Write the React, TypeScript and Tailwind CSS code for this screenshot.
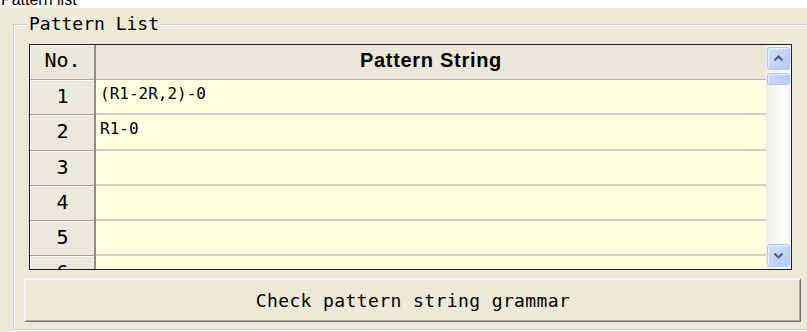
import React from "react";

const mono = { fontFamily: '"DejaVu Sans Mono", "Liberation Mono", monospace' } as const;

const rows: { n: string; text?: string; h: string }[] = [
  { n: "1", text: "(R1-2R,2)-0", h: "h-[35px]" },
  { n: "2", text: "R1-0", h: "h-[36px]" },
  { n: "3", h: "h-[35px]" },
  { n: "4", h: "h-[35px]" },
  { n: "5", h: "h-[35px]" },
  { n: "6", h: "h-[35px]" },
];

function ScrollButton({ dir }: { dir: "up" | "down" }) {
  return (
    <div className="mx-[1px] h-[23px] w-[23px] rounded-[3px] border border-[#b3c6f3] bg-[linear-gradient(135deg,#d3e0fe,#b6caf8)] shadow-[inset_1px_1px_0_#e9f0ff] flex items-center justify-center">
      <svg width="11" height="7" viewBox="0 0 11 7">
        {dir === "up" ? (
          <path d="M1.5 5.5 L5.5 1.5 L9.5 5.5" fill="none" stroke="#4d6185" strokeWidth="2.2" />
        ) : (
          <path d="M1.5 1.5 L5.5 5.5 L9.5 1.5" fill="none" stroke="#4d6185" strokeWidth="2.2" />
        )}
      </svg>
    </div>
  );
}

export default function App() {
  return (
    <div className="relative h-[332px] w-[807px] overflow-hidden bg-[#ece9d8]">
      <div className="h-[8px] overflow-hidden bg-white">
        <div
          className="mt-[-8px] pl-[1px] text-[16px] leading-[16px] text-black"
          style={{ fontFamily: '"Liberation Sans", Arial, sans-serif' }}
        >
          Pattern list
        </div>
      </div>

      <div className="ml-[13px] mt-[16px] h-[306px] w-[820px] border border-[#d0d0bf] shadow-[inset_1px_1px_0_#ffffff,1px_1px_0_#ffffff] relative">
        <div
          className="absolute left-[13px] top-[-12px] bg-[#ece9d8] px-[2px] text-[18px] leading-[22px] text-black"
          style={mono}
        >
          Pattern List
        </div>

        {/* table */}
        <div className="ml-[15px] mt-[19px] flex h-[226px] w-[763px] border border-[#1e1e1e] shadow-[inset_1px_1px_0_#7a7a72] overflow-hidden">
          <div className="flex flex-1 flex-col overflow-hidden">
            {/* header */}
            <div className="flex h-[35px] shrink-0">
              <div
                className="flex w-[66px] items-center justify-center border-r-2 border-b border-r-[#8e8c82] border-b-[#a7a598] bg-[#ebe8d9] pb-[5px] pl-[1px] text-[20px] text-black shadow-[inset_1px_1px_0_#fdfdf8]"
                style={mono}
              >
                No.
              </div>
              <div
                className="flex flex-1 items-center justify-center border-b border-[#b9b7ab] bg-[#ebe8d9] pb-[4px] text-[20px] font-bold tracking-[0.7px] text-black"
                style={{ fontFamily: '"Liberation Sans", Arial, sans-serif' }}
              >
                Pattern String
              </div>
            </div>
            {rows.map((r) => (
              <div key={r.n} className={`flex shrink-0 ${r.h}`}>
                <div
                  className="flex w-[66px] items-center justify-center border-r-2 border-b border-r-[#8e8c82] border-b-[#a19f94] bg-[#ebe9db] pb-[3px] pl-[1px] text-[20px] text-black shadow-[inset_1px_1px_0_#fdfdf8]"
                  style={mono}
                >
                  {r.n}
                </div>
                <div
                  className="flex-1 border-b-2 border-[#cfcfc6] bg-[#ffffe1] pl-[4px] pt-[5px] text-[16px] leading-[18px] text-black"
                  style={mono}
                >
                  {r.text ?? ""}
                </div>
              </div>
            ))}
          </div>
          {/* scrollbar */}
          <div className="flex w-[25px] flex-col justify-between bg-[linear-gradient(90deg,#eeede6,#fbfbf8_70%,#f4f3ee)] py-[2px]">
            <div className="flex flex-col gap-[3px]">
              <ScrollButton dir="up" />
              <div className="mx-[1px] h-[12px] w-[23px] rounded-[3px] border border-[#b3c6f3] bg-[linear-gradient(90deg,#cbdafd,#b9ccf8)] shadow-[inset_1px_1px_0_#e9f0ff]" />
            </div>
            <ScrollButton dir="down" />
          </div>
        </div>

        {/* button */}
        <div
          className="ml-[10px] mt-[8px] flex h-[44px] w-[777px] items-center justify-center border-t-2 border-l-2 border-r border-b border-t-[#fbfaf6] border-l-[#f7f6f0] border-r-[#716f64] border-b-[#716f64] bg-[#ece9d8] pb-[1px] text-[18px] tracking-[0.4px] text-black shadow-[inset_-1px_-1px_0_#aca899]"
          style={mono}
        >
          Check pattern string grammar
        </div>
      </div>
    </div>
  );
}
